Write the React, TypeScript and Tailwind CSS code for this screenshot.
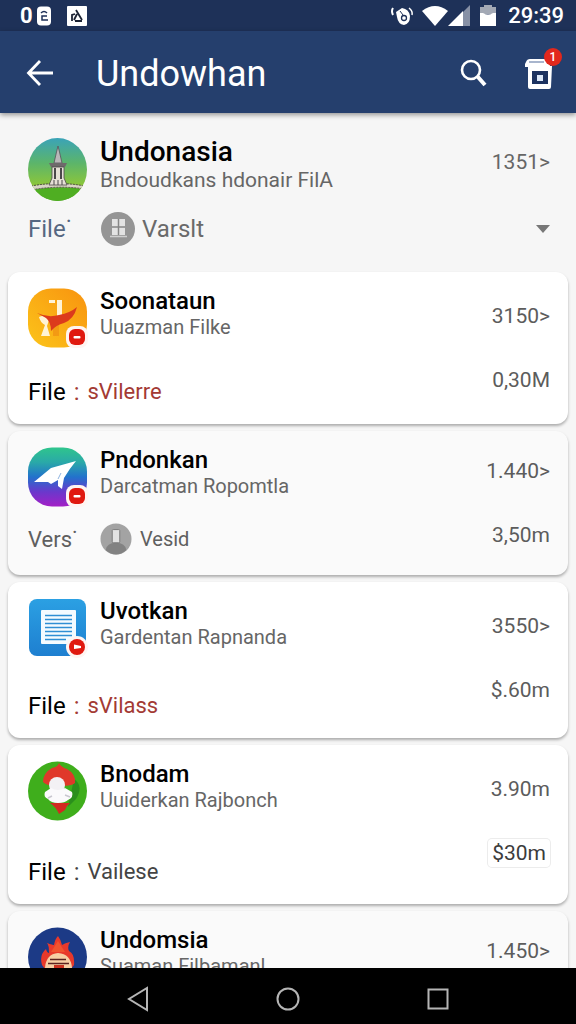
import React, { useState } from 'react';

interface AppItem {
  id: string;
  title: string;
  subtitle: string;
  icon: React.ReactNode;
  value: string;
  amount?: string;
  footer?: React.ReactNode;
  badge?: 'square' | 'round';
  muted?: boolean;
  boxed?: boolean;
  spacing: string;
  valueSpacing: string;
}

function MonumentIcon() {
  return (
    <svg viewBox="0 0 60 63" className="w-[60px] h-[63px] shrink-0">
      <defs>
        <linearGradient id="sky" x1="0" y1="0" x2="0" y2="1">
          <stop offset="0" stopColor="#3aa3b8" />
          <stop offset="0.4" stopColor="#5cb56a" />
          <stop offset="0.75" stopColor="#8cc63a" />
          <stop offset="1" stopColor="#4da525" />
        </linearGradient>
        <clipPath id="skyClip">
          <ellipse cx="29.500" cy="31.500" rx="29.500" ry="31.500" />
        </clipPath>
      </defs>
      <g clipPath="url(#skyClip)">
        <rect width="60" height="63" fill="url(#sky)" />
        <path d="M0 52 Q30 46 60 52 V63 H0Z" fill="#4fae22" />
        <path d="M3 48 Q30 43 57 48 V51 Q30 47 3 52Z" fill="#d8d4c4" stroke="#4d4a42" strokeWidth="1" strokeDasharray="2 1" />
        <path d="M30 8 L31.500 14 L34 25 H26 L28.500 14Z" fill="#b9b7b8" stroke="#55535a" strokeWidth="0.8" />
        <path d="M21 25 H39 L37 29 H23Z" fill="#6e6a6b" />
        <path d="M24 29 H36 V40 L39 47 H21 L24 40Z" fill="#e6e0d6" stroke="#4b484a" strokeWidth="0.8" />
        <path d="M27 30 V41 M33 30 V41" stroke="#4b484a" strokeWidth="2" />
        <path d="M26 42 V47 M30 42 V47 M34 42 V47" stroke="#4b484a" strokeWidth="1" />
      </g>
    </svg>
  );
}

function KiteIcon() {
  return (
    <svg viewBox="0 0 60 60" className="size-[60px]">
      <defs>
        <linearGradient id="amber" x1="0" y1="1" x2="1" y2="0">
          <stop offset="0" stopColor="#fcc41a" />
          <stop offset="1" stopColor="#f8930f" />
        </linearGradient>
      </defs>
      <rect x="0" y="0.500" width="59" height="59" rx="23" fill="url(#amber)" />
      <path d="M21 12 h6 v3 h-6z M29 12 h5 v17 h-5z" fill="#fff3d6" />
      <path d="M11 29 Q17 26 21 32 L19 38 L22 48 H13 L17 37 Q12 34 11 29Z" fill="#fff3d6" />
      <path d="M25 35 H31 V48 H25Z" fill="#f39a13" />
      <path d="M9 25 Q20 30 31 27 Q42 25 49 19 Q46 31 36 35 Q28 37 23 43 Q23 34 18 30Z" fill="#dc3a1c" />
    </svg>
  );
}

function PlaneIcon() {
  return (
    <svg viewBox="0 0 60 60" className="size-[60px]">
      <defs>
        <linearGradient id="dusk" x1="0" y1="0" x2="0" y2="1">
          <stop offset="0" stopColor="#2fc58c" />
          <stop offset="0.250" stopColor="#2aa9a8" />
          <stop offset="0.500" stopColor="#2272cc" />
          <stop offset="0.750" stopColor="#6a38cc" />
          <stop offset="1" stopColor="#a31fc6" />
        </linearGradient>
      </defs>
      <rect x="0" y="0.500" width="59" height="59" rx="24" fill="url(#dusk)" />
      <path d="M6 35 L23 21 L48 14 Q42 21 36 31 L34 42 L30 39 L30 33 L23 37 L20 35Z" fill="#fff" />
      <path d="M30 32 L33 26" stroke="#8fb3e0" strokeWidth="1" />
    </svg>
  );
}

function DocumentIcon() {
  return (
    <svg viewBox="0 0 60 60" className="size-[60px]">
      <defs>
        <linearGradient id="blueDoc" x1="0" y1="0" x2="0" y2="1">
          <stop offset="0" stopColor="#2ba0e3" />
          <stop offset="1" stopColor="#1e7fd0" />
        </linearGradient>
      </defs>
      <rect x="1" y="1" width="57" height="57" rx="8" fill="url(#blueDoc)" />
      <rect x="13" y="12" width="35" height="34" rx="1" fill="#f4fbff" />
      <path d="M17 17.500 H44 M17 21.500 H44 M17 25.500 H44 M17 29.500 H44 M17 33.500 H44 M17 37.500 H44 M17 41.500 H38" stroke="#2f8fd4" strokeWidth="1.500" />
    </svg>
  );
}

function GuardianIcon() {
  return (
    <svg viewBox="0 0 60 60" className="size-[60px]">
      <circle cx="29.500" cy="30" r="29.500" fill="#3fae1c" />
      <path d="M46 18 Q56 25 48 38 L40 46Z" fill="#2b8f1c" />
      <path d="M31 2 Q33 6 39 8 Q48 13 47 22 Q42 26 31 24 Q20 26 15 21 Q15 12 24 7 Q30 6 31 2Z" fill="#e0382a" />
      <path d="M22 42 H42 Q38 45 37 49 L31 53 Q28 46 22 42Z" fill="#d12a20" />
      <circle cx="29" cy="24" r="8" fill="#f3f1f4" />
      <path d="M23 27 Q30 31 37 27 L44 31 Q46 36 40 39 Q37 42 30 42 Q23 42 20 38 Q15 36 17 31Z" fill="#fbfafc" />
      <path d="M20 37 L24 35 M42 36 L37 34" stroke="#c9c7d0" strokeWidth="1.500" />
    </svg>
  );
}

function FlameIcon() {
  return (
    <svg viewBox="0 0 60 60" className="size-[60px]">
      <circle cx="29.500" cy="30" r="29.500" fill="#1c3a86" />
      <path d="M14 38 Q11 28 18 22 Q19 26 21 26 Q21 18 19 16 Q25 18 26 18 Q27 12 30 9 Q33 13 34 18 Q37 16 42 15 Q39 20 41 24 Q47 27 46 38 L40 46 H20Z" fill="#e8392b" />
      <path d="M23 25 L30 14 L37 25Z" fill="#f0532f" />
      <path d="M17 41 Q18 27 30 26 Q43 27 44 41 V56 H17Z" fill="#f7cfa4" />
      <path d="M22 32.500 H38 M20 36.500 H41" stroke="#5b2320" strokeWidth="1.500" />
      <path d="M26 38 H36 V56 H26Z" fill="#c9301f" />
    </svg>
  );
}

function StatusBadge({ shape }: { shape: 'square' | 'round' }) {
  return (
    <svg viewBox="0 0 22 22" className="absolute right-0 bottom-0 size-[22px]">
      <rect x="0" y="0" width="22" height="22" rx={shape === 'round' ? 11 : 8} fill="#fff5f2" />
      <rect x="3" y="3" width="16" height="16" rx={shape === 'round' ? 8 : 6} fill="#e0190f" />
      {shape === 'round' ? (
        <path d="M8 8.500 L15 10 V12 L8 13Z" fill="#fff" />
      ) : (
        <rect x="7.500" y="10" width="7" height="2.500" rx="1" fill="#fff" />
      )}
    </svg>
  );
}

function FileLine({ value, accent }: { value: string; accent?: boolean }) {
  return (
    <p className="flex h-10 items-center gap-2 text-2xl text-black">
      <span>File</span>
      <span className={accent ? 'text-[#a33a34]' : 'text-[#444]'}>:</span>
      <span className={accent ? 'text-[22px] text-[#a33a34]' : 'text-[22px] text-[#444]'}>{value}</span>
    </p>
  );
}

function VersionLine() {
  return (
    <div className="flex h-12 items-center text-[22px] text-[#5f5f5f]">
      <span className="w-[72px]">Vers˙</span>
      <svg viewBox="0 0 34 34" className="mr-2 size-8">
        <circle cx="17" cy="17" r="16.500" fill="#a3a3a3" />
        <path d="M6 29 Q7 21 17 21 Q27 21 28 29 Q17 38 6 29Z" fill="#828282" />
        <rect x="13" y="7" width="8" height="14" rx="1" fill="#e2e2e2" stroke="#777" strokeWidth="1" />
      </svg>
      <span className="text-xl">Vesid</span>
    </div>
  );
}

const items: AppItem[] = [
  {
    id: 'soonataun',
    title: 'Soonataun',
    subtitle: 'Uuazman Filke',
    icon: <KiteIcon />,
    value: '3150>',
    amount: '0,30M',
    footer: <FileLine value="sVilerre" accent />,
    badge: 'square',
    spacing: 'gap-6',
    valueSpacing: 'pt-[30px]',
  },
  {
    id: 'pndonkan',
    title: 'Pndonkan',
    subtitle: 'Darcatman Ropomtla',
    icon: <PlaneIcon />,
    value: '1.440>',
    amount: '3,50m',
    footer: <VersionLine />,
    badge: 'square',
    muted: true,
    spacing: 'gap-2',
    valueSpacing: 'pt-[26px]',
  },
  {
    id: 'uvotkan',
    title: 'Uvotkan',
    subtitle: 'Gardentan Rapnanda',
    icon: <DocumentIcon />,
    value: '3550>',
    amount: '$.60m',
    footer: <FileLine value="sVilass" accent />,
    badge: 'round',
    spacing: 'gap-7',
    valueSpacing: 'pt-[30px]',
  },
  {
    id: 'bnodam',
    title: 'Bnodam',
    subtitle: 'Uuiderkan Rajbonch',
    icon: <GuardianIcon />,
    value: '3.90m',
    amount: '$30m',
    footer: <FileLine value="Vailese" />,
    boxed: true,
    spacing: 'gap-[31px]',
    valueSpacing: 'pt-[30px]',
  },
  {
    id: 'undomsia',
    title: 'Undomsia',
    subtitle: 'Suaman Filbamanl',
    icon: <FlameIcon />,
    value: '1.450>',
    muted: true,
    spacing: 'gap-6',
    valueSpacing: 'pt-[26px]',
  },
];

function AppCard({ item }: { item: AppItem }) {
  return (
    <li
      className={`flex justify-between rounded-xl pr-[18px] pl-5 shadow-[0_2px_3px_rgba(0,0,0,0.3)] ${
        item.muted ? 'bg-[#fafafa]' : 'bg-white'
      }`}
    >
      <div className={`flex flex-col pt-4 pb-3 ${item.spacing}`}>
        <div className="flex gap-3">
          <div className="relative size-[60px] shrink-0">
            {item.icon}
            {item.badge && <StatusBadge shape={item.badge} />}
          </div>
          <div>
            <h2 className="text-2xl leading-[26px] font-medium text-black">{item.title}</h2>
            <p className="text-xl leading-[26px] text-[#666]">{item.subtitle}</p>
          </div>
        </div>
        {item.footer}
      </div>
      <div className={`flex flex-col items-end gap-9 text-[21px] leading-7 text-[#5c5c5c] ${item.valueSpacing}`}>
        <span>{item.value}</span>
        {item.amount && (
          <span className={item.boxed ? 'rounded-sm px-1 text-[#3c3c3c] ring-1 ring-[#ececec]' : ''}>
            {item.amount}
          </span>
        )}
      </div>
    </li>
  );
}

function StatusBar() {
  return (
    <div className="flex h-[31px] items-center justify-between bg-[#1e3158] pr-3 pl-5 text-white">
      <div className="flex items-center gap-1">
        <span className="text-[22px] leading-none font-bold">0</span>
        <svg viewBox="0 0 14 20" className="h-5 w-3.5">
          <rect width="14" height="19" y="0.500" rx="4" fill="#fff" />
          <path d="M4 7 Q7 4 10 7 M10 10 H5 V14 H11" fill="none" stroke="#1e3158" strokeWidth="1.500" />
        </svg>
        <svg viewBox="0 0 20 20" className="ml-3 size-5">
          <rect width="20" height="20" rx="1" fill="#fff" />
          <path d="M5 15 V9 L8 8 M9 4 L15 14 M10 8 L7 14 M8 15 H15" fill="none" stroke="#1b2233" strokeWidth="1.800" />
        </svg>
      </div>
      <div className="flex items-center">
        <svg viewBox="0 0 24 20" className="h-5 w-6">
          <path d="M3 2 Q1 5 3 9" fill="none" stroke="#fff" strokeWidth="2" />
          <path d="M6 6 L12 2 Q19 3 20 10 Q20 18 14 19 Q8 18 7 11Z" fill="#fff" />
          <path d="M10 5 L13 9" stroke="#1e3158" strokeWidth="1" />
          <circle cx="14" cy="12" r="2.500" fill="none" stroke="#1e3158" strokeWidth="1.300" />
          <path d="M19 2 Q23 5 22 9" fill="none" stroke="#fff" strokeWidth="1.500" />
        </svg>
        <svg viewBox="0 0 26 20" className="ml-2 h-5 w-[26px]">
          <path d="M0 5 Q13 -5 26 5 L13 20Z" fill="#fff" />
        </svg>
        <svg viewBox="0 0 22 22" className="h-[22px] w-[22px]">
          <path d="M15 7 L22 0 V21 H15Z" fill="#8690a5" />
          <path d="M0 21 L15 6 V21Z" fill="#fff" />
        </svg>
        <svg viewBox="0 0 16 22" className="ml-2.5 h-[22px] w-4">
          <path d="M4 0 H12 V2 H16 V9 H0 V2 H4Z" fill="#a3a9b5" />
          <path d="M0 8 H3 Q8 11 13 8 H16 V21 H0Z" fill="#fff" />
        </svg>
        <span className="ml-3 text-[22px] leading-none font-medium">29:39</span>
      </div>
    </div>
  );
}

function Header() {
  return (
    <header className="relative z-10 flex h-[82px] items-center bg-[#253f6d] pt-1 pr-5 pl-6 text-white shadow-[0_2px_5px_rgba(0,0,0,0.4)]">
      <button type="button" aria-label="Back" className="flex size-8 items-center justify-center">
        <svg viewBox="0 0 32 32" className="size-8" fill="none" stroke="#fff" strokeWidth="2.800">
          <path d="M29 15 H5 M16 3 L4.500 15 L16 27" />
        </svg>
      </button>
      <h1 className="ml-10 flex-1 text-4xl leading-10">Undowhan</h1>
      <button type="button" aria-label="Search" className="flex size-8 items-center justify-center">
        <svg viewBox="0 0 32 32" className="size-8" fill="none" stroke="#fff">
          <circle cx="15" cy="12" r="9" strokeWidth="2.600" />
          <path d="M21.500 18.500 L29 27" strokeWidth="4" />
        </svg>
      </button>
      <button type="button" aria-label="Store" className="relative ml-8 flex size-9 items-center justify-center">
        <svg viewBox="0 0 36 36" className="size-9">
          <path d="M6 6 Q7 3 10 3 H26 Q29 3 30 6 V11 H5 V8Z" fill="#fff" />
          <path d="M9 6 H24" stroke="#8b9dbd" strokeWidth="1.500" />
          <path d="M8 10 H32 L31 31 Q31 33 29 33 H10 Q8 33 8 31Z" fill="#fff" />
          <rect x="12" y="15" width="16" height="13" fill="#1c3260" />
          <rect x="17" y="19" width="6" height="6" fill="#dce8f8" />
        </svg>
        <span className="absolute -top-2 -right-1.5 flex size-[18px] items-center justify-center rounded-full bg-[#e2281c] text-xs leading-none font-medium">
          1
        </span>
      </button>
    </header>
  );
}

function FeaturedSection() {
  const [version, setVersion] = useState('Varslt');

  return (
    <section className="flex flex-col gap-1 pt-[25px] pr-[26px] pb-[19px] pl-7 text-[#666]">
      <div className="flex gap-3">
        <MonumentIcon />
        <div className="flex-1">
          <h2 className="text-[28px] leading-7 font-medium text-black">Undonasia</h2>
          <p className="text-[21px] leading-7">Bndoudkans hdonair FilA</p>
        </div>
        <span className="self-center pb-4 text-[21px] leading-7">1351&gt;</span>
      </div>
      <div className="flex h-12 items-center">
        <label htmlFor="version" className="w-[72px] text-2xl text-[#566781]">File˙</label>
        <svg viewBox="0 0 36 36" className="size-9 shrink-0">
          <circle cx="18" cy="18" r="17" fill="#959595" />
          <path d="M12 8 H25 V24 H12Z" fill="#e3e3e3" />
          <path d="M18.500 8 V24 M12 16 H25" stroke="#868686" strokeWidth="1.500" />
          <path d="M10 25.500 H27" stroke="#d0d0d0" strokeWidth="1.500" />
        </svg>
        <select
          id="version"
          value={version}
          onChange={(e) => setVersion(e.target.value)}
          className="ml-1.5 flex-1 appearance-none bg-transparent text-2xl text-[#6a6a6a]"
        >
          <option value="Varslt">Varslt</option>
          <option value="Vesid">Vesid</option>
        </select>
        <svg viewBox="0 0 14 8" className="h-2 w-3.5 shrink-0">
          <path d="M0 0 H14 L7 8Z" fill="#777" />
        </svg>
      </div>
    </section>
  );
}

function NavigationBar() {
  return (
    <nav className="flex h-14 shrink-0 items-center justify-center bg-black pt-1.5">
      <div className="flex w-[57%] items-center justify-between">
        <button type="button" aria-label="Back">
          <svg viewBox="0 0 28 28" className="size-7" fill="none" stroke="#b5b5b5" strokeWidth="2">
            <path d="M23 3 V25 L5 14Z" />
          </svg>
        </button>
        <button type="button" aria-label="Home">
          <svg viewBox="0 0 28 28" className="size-7" fill="none" stroke="#b5b5b5" strokeWidth="2">
            <circle cx="14" cy="14" r="10.500" />
          </svg>
        </button>
        <button type="button" aria-label="Recent apps">
          <svg viewBox="0 0 28 28" className="size-7" fill="none" stroke="#b5b5b5" strokeWidth="2">
            <rect x="4.500" y="4.500" width="19" height="19" />
          </svg>
        </button>
      </div>
    </nav>
  );
}

export default function App() {
  return (
    <div className="flex h-screen flex-col bg-[#f6f6f6] font-['Roboto',sans-serif]">
      <StatusBar />
      <Header />
      <main className="min-h-0 flex-1 overflow-hidden">
        <FeaturedSection />
        <ul className="flex flex-col gap-[7px] px-2">
          {items.map((item) => (
            <AppCard key={item.id} item={item} />
          ))}
        </ul>
      </main>
      <NavigationBar />
    </div>
  );
}
